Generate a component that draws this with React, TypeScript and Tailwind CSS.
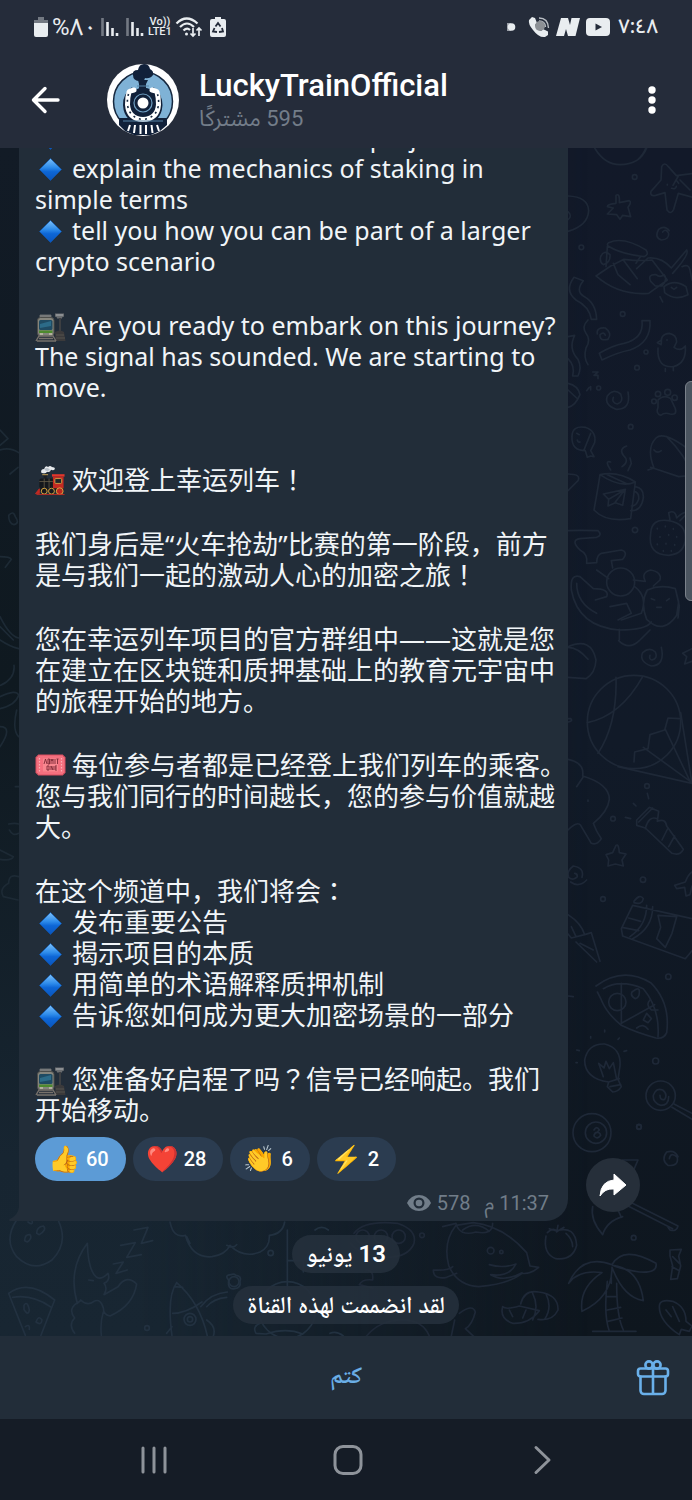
import { Fragment, type ReactNode } from "react";

/* ---------- inline message pictograms ---------- */

function Diamond() {
  return (
    <svg viewBox="0 0 31 28" className="-my-2 mr-[6px] inline-block h-7 w-[31px] align-[3px]" role="img" aria-label="blue diamond">
      <defs>
        <linearGradient id="dia" x1="0" y1="0" x2="0" y2="1">
          <stop offset="0" stopColor="#7cc0fa" />
          <stop offset="0.4" stopColor="#2f8deb" />
          <stop offset="0.6" stopColor="#0d66d6" />
          <stop offset="1" stopColor="#0a55bd" />
        </linearGradient>
      </defs>
      <path d="M15.500 3.500 26.500 14.500 15.500 25.500 4.500 14.500Z" fill="url(#dia)" stroke="#0f5ab8" strokeWidth="0.600" strokeLinejoin="round" />
    </svg>
  );
}

function Station() {
  return (
    <svg viewBox="0 0 31 30" className="-my-2 mr-[6px] inline-block h-[30px] w-[31px] align-[1px]" role="img" aria-label="station">
      <path d="M20 1.500h9v3l-2 1v1h-5v-1l-2-1z" fill="#6a6d70" />
      <path d="M21 3h7" stroke="#aeb2b4" strokeWidth="1" />
      <path d="M24 6h2v14h-2z" fill="#3d3f42" />
      <path d="M20 20q5-3 9 0l1.500 9h-10z" fill="#3b3a3b" />
      <path d="M21 23h8M21 26h9" stroke="#55534f" strokeWidth="1" />
      <path d="M5 3h11v2H5zM7 4l-1 3M14 4l1 3" fill="#77797a" stroke="#77797a" strokeWidth="0.800" />
      <rect x="2.500" y="5.500" width="16.500" height="18.500" rx="3" fill="#85857d" stroke="#4d4e4b" />
      <rect x="4" y="8" width="13.500" height="10" rx="1.500" fill="#1f4b63" />
      <path d="M5 12l11-3v5l-11 2z" fill="#2f7391" opacity="0.800" />
      <path d="M4 18.500h13.500v2.500H4z" fill="#4d8a2e" />
      <path d="M5 22h3M14 22h3" stroke="#e2dfc0" strokeWidth="1.200" />
      <path d="M1 29l3-5h14l3 5M4 26.500h14M2 29h19" fill="none" stroke="#77716b" strokeWidth="1.400" />
    </svg>
  );
}

function Locomotive() {
  return (
    <svg viewBox="0 0 31 32" className="-my-2 mr-[6px] inline-block h-[31px] w-[31px] align-[2px]" role="img" aria-label="locomotive">
      <path d="M6 8q-1-4 3-4 1-4 4-2 2-2 4 0 3 0 3 2-1 2-4 1-1 3-4 2-2 3-6 1z" fill="#e6e9ec" />
      <path d="M9 4q3-2 5 0 2 1-1 2-2 1-4-2z" fill="#b7bfc7" />
      <path d="M7 9h6l-1.500 3v3H8.500v-3z" fill="#1b1e22" />
      <path d="M7 10h6" stroke="#c9a65a" />
      <rect x="4" y="14" width="15" height="10" rx="2" fill="#15181c" />
      <path d="M4 17h14M9 14v10M14 14v10" stroke="#69604a" strokeWidth="0.800" />
      <path d="M17 9.500h13v2.500H17z" fill="#e3362c" />
      <path d="M18 12h11v14H18z" fill="#c32a22" />
      <rect x="20" y="14" width="7" height="5" rx="1" fill="#20252b" stroke="#e8b64a" strokeWidth="0.800" />
      <path d="M4 24h25v2.500H4z" fill="#1a1c20" />
      <circle cx="9" cy="27" r="3" fill="#17191d" stroke="#d9a63f" />
      <circle cx="16.500" cy="27" r="3" fill="#17191d" stroke="#d9a63f" />
      <circle cx="25" cy="27" r="3.500" fill="#b9271f" stroke="#d9a63f" />
      <path d="M0 29.500l4-5v5zM1 30.500h29" fill="#c32a22" stroke="#c32a22" strokeWidth="0.900" />
    </svg>
  );
}

function Ticket() {
  return (
    <svg viewBox="0 0 31 22" className="-my-1 mr-[6px] inline-block h-[22px] w-[31px] align-[3px]" role="img" aria-label="admission ticket">
      <path d="M3 1h25a2 2 0 0 0 2 2v16a2 2 0 0 0-2 2H3a2 2 0 0 0-2-2V3a2 2 0 0 0 2-2z" fill="#f4707f" stroke="#d94f60" />
      <path d="M4.500 4v14M26.500 4v14" stroke="#fbb0b6" strokeWidth="1.200" strokeDasharray="1.500 1.500" />
      <path d="M8 4.500h15v13H8z" fill="#f8868f" />
      <path d="M9 10l1.500-5 1.500 5M13 5v5h1.500V5zM16 10V5l1 2 1-2v5M20 5v5M21.500 5h2M22.500 5v5M12 12v4h2v-4zM16 16v-4l2 4v-4M22 12h-2v4h2M20 14h2" fill="none" stroke="#7c2733" strokeWidth="0.900" />
    </svg>
  );
}

/* Full-width marks drawn centred in their cell. */
function Mark({ children }: { children: ReactNode }) {
  return (
    <span lang="ja" className="font-['Noto_Sans_CJK_JP','Noto_Sans_CJK_SC',sans-serif] leading-none">
      {children}
    </span>
  );
}

function Lines({ items }: { items: ReactNode[] }) {
  return (
    <p>
      {items.map((line, i) => (
        <Fragment key={i}>
          {i > 0 && <br />}
          {line}
        </Fragment>
      ))}
    </p>
  );
}

function Message() {
  return (
    <div className="flex flex-col gap-[62px] text-[#f1f5f8]">
      <div lang="en" className="flex flex-col gap-[33px] font-['Noto_Sans',sans-serif] text-[25px] leading-[31px]">
        <Lines
          items={[
            <><Diamond />reveal the essence of the project</>,
            <><Diamond />explain the mechanics of staking in</>,
            "simple terms",
            <><Diamond />tell you how you can be part of a larger</>,
            "crypto scenario",
          ]}
        />
        <Lines
          items={[
            <><Station />Are you ready to embark on this journey?</>,
            "The signal has sounded. We are starting to",
            "move.",
          ]}
        />
      </div>
      <div lang="zh-CN" className="flex flex-col gap-[33px] font-['Noto_Sans','Noto_Sans_CJK_SC',sans-serif] text-[26px] leading-[31px]">
        <Lines items={[<><Locomotive />欢迎登上幸运列车<Mark>！</Mark></>]} />
        <Lines
          items={["我们身后是“火车抢劫”比赛的第一阶段，前方", <>是与我们一起的激动人心的加密之旅<Mark>！</Mark></>]}
        />
        <Lines
          items={["您在幸运列车项目的官方群组中——这就是您", "在建立在区块链和质押基础上的教育元宇宙中", "的旅程开始的地方。"]}
        />
        <Lines
          items={[<><Ticket />每位参与者都是已经登上我们列车的乘客。</>, "您与我们同行的时间越长，您的参与价值就越", "大。"]}
        />
        <Lines
          items={[
            <>在这个频道中，我们将会<Mark>：</Mark></>,
            <><Diamond />发布重要公告</>,
            <><Diamond />揭示项目的本质</>,
            <><Diamond />用简单的术语解释质押机制</>,
            <><Diamond />告诉您如何成为更大加密场景的一部分</>,
          ]}
        />
        <Lines items={[<><Station />您准备好启程了吗<Mark>？</Mark>信号已经响起。我们</>, "开始移动。"]} />
      </div>
    </div>
  );
}

/* ---------- header ---------- */

function StatusBar() {
  return (
    <div className="flex h-[54px] items-center justify-between px-[34px] text-[#e9edf0]">
      <div className="flex items-center">
        <svg viewBox="0 0 14 22" className="h-[22px] w-[14px]" fill="#e9edf0">
          <path d="M4 1h6v3h4v3H0V4h4z" opacity="0.400" />
          <path d="M0 7h14v12a2 2 0 0 1-2 2H2a2 2 0 0 1-2-2z" />
        </svg>
        <span className="ml-1 font-['Roboto','Noto_Sans_Arabic',sans-serif] text-[24px] leading-7">%٨٠</span>
        <svg viewBox="0 0 44 20" className="ml-[3px] h-5 w-11" strokeWidth="2.600" stroke="#e9edf0">
          <path d="M2.500 1v18M27.500 1v18" opacity="0.400" />
          <path d="M7.500 5v14M12.500 11v8M17 16v3M32.500 5v14M37.500 11v8M42 16v3" />
        </svg>
        <span className="ml-1 flex flex-col items-center font-['Roboto',sans-serif] text-[11px] leading-[10px] font-medium">
          <span>Vo))</span>
          <span>LTE1</span>
        </span>
        <svg viewBox="0 0 28 22" className="ml-[3px] h-[22px] w-7" fill="none" stroke="#e9edf0" strokeWidth="2.200">
          <path d="M1.500 7.500q10-10 21 0M5 11q7-7 14 0M8.500 14.500q3.500-3.500 6.500-.5" />
          <circle cx="11.500" cy="18" r="1.500" fill="#e9edf0" stroke="none" />
          <path d="M18 12v8M15.500 17.500l2.500 2.500 2.500-2.500M24 20v-8M21.500 14.500l2.500-2.500 2.500 2.500" strokeWidth="1.700" />
        </svg>
        <svg viewBox="0 0 16 22" className="ml-[7px] h-[22px] w-4">
          <path d="M5 1h6v2h3a2 2 0 0 1 2 2v14a2 2 0 0 1-2 2H2a2 2 0 0 1-2-2V5a2 2 0 0 1 2-2h3z" fill="#e9edf0" />
          <path d="M5.500 10.500 8 7l2.500 3.500M12 12l1 3.500-4 .5M7 16l-4-.5L4.500 12" fill="none" stroke="#252c3a" strokeWidth="1.800" />
        </svg>
      </div>
      <div className="flex items-center">
        <svg viewBox="0 0 10 10" className="h-[10px] w-[10px]" fill="#e9edf0">
          <path d="M1 1h4v8H1z" opacity="0.600" />
          <circle cx="5.500" cy="5" r="3.800" />
        </svg>
        <svg viewBox="0 0 22 22" className="ml-[12px] h-[22px] w-[22px]">
          <path d="M1 4 4 1l3 1 2 5-2 2q2 4 6 6l2-2 5 2.500V19l-3 2Q11 22 5 14 0 8 1 4z" fill="#e9edf0" />
          <path d="M11 2q9 0 9.500 10M11 5q6 0 6.500 6" fill="none" stroke="#b9bec4" strokeWidth="1.400" />
          <circle cx="12" cy="10" r="5" fill="#8c9095" />
        </svg>
        <svg viewBox="0 0 24 20" className="ml-[6px] h-5 w-6" fill="#e9edf0">
          <path d="M5 1h7l2 7 1.500-7H24l-4.500 18H12l-2-7-2 7H0z" />
        </svg>
        <svg viewBox="0 0 24 18" className="ml-[6px] h-[18px] w-6">
          <rect width="24" height="18" rx="4" fill="#e9edf0" />
          <path d="M9.500 5.500 16 9l-6.500 3.500z" fill="#252c3a" />
        </svg>
        <time className="ml-[8px] font-['Noto_Sans_Arabic','Noto_Sans',sans-serif] text-[20px] leading-7 font-medium">٧:٤٨</time>
      </div>
    </div>
  );
}

function Avatar() {
  return (
    <svg viewBox="0 0 72 72" className="h-[72px] w-[72px] shrink-0" role="img" aria-label="LuckyTrainOfficial">
      <circle cx="36" cy="36" r="36" fill="#fff" />
      <circle cx="36" cy="37.500" r="29.500" fill="#7fb2d6" stroke="#16283f" strokeWidth="1.500" />
      <path d="M26 11q-1-5 5-5 1-6 6-6 5 0 6 5 4 2 3 6-3 4-8 3-1 4-5 3-7 0-7-6z" fill="#11213a" />
      <path d="M31 16h10l-2 4v6h-7v-6z" fill="#11213a" />
      <path d="M30 22h12" stroke="#5784a6" strokeWidth="1" />
      <path d="M28 26q8-5 17 0l5 12-2 18H22l-2-18z" fill="#11213a" />
      <path d="M12 54h48v7l-7 6-9 4H27l-9-4-6-6z" fill="#11213a" />
      <path d="M27 26q-8 6-7.500 15 1 15 16.500 15.500 15-.500 16-15.500 0-9-7.500-15" fill="none" stroke="#11213a" strokeWidth="7" />
      <path d="M27 26q-4.500 1-5 2-1.500 5-1.500 12.500 1 14.500 15.500 15 14.500-.500 15.500-15 0-7.500-1.500-12.500-.500-1-5-2" fill="none" stroke="#fff" strokeWidth="5" strokeLinecap="round" strokeLinejoin="round" />
      <path d="M21.500 30q-1.500 5-1 11 2 13 15.500 14.500 13.500-1.500 15.500-14.500.500-6-1-11" fill="none" stroke="#16283f" strokeWidth="1.600" strokeDasharray="2 4" />
      <circle cx="36" cy="39" r="12" fill="#11213a" />
      <circle cx="36" cy="39" r="9" fill="none" stroke="#6f9fc2" strokeWidth="1.200" />
      <circle cx="36" cy="39" r="5.500" fill="#fff" />
      <path d="M23 61l-2 6M28 61l-1 8M33.500 61v9M39 61v9M44.500 61l1 8M50 61l2 6" stroke="#fff" strokeWidth="2" />
      <path d="M16 57h40" stroke="#5784a6" strokeWidth="1.200" />
    </svg>
  );
}

function Header() {
  return (
    <header className="z-10 shrink-0 bg-[#252c3a]">
      <StatusBar />
      <div className="flex h-[94px] items-center pr-8 pb-[2px] pl-[30px]">
        <button type="button" aria-label="Back" className="flex h-12 w-8 items-center">
          <svg viewBox="0 0 32 32" className="h-8 w-8" fill="none" stroke="#fff" strokeWidth="3.400" strokeLinecap="round" strokeLinejoin="round">
            <path d="M28 16H4M15 4.500 3.500 16 15 27.500" />
          </svg>
        </button>
        <a href="#profile" className="ml-[45px] flex min-w-0 flex-1 items-center">
          <Avatar />
          <span className="ml-5 flex flex-col items-start pt-[2px] whitespace-nowrap">
            <span className="font-['Roboto',sans-serif] text-[31px] leading-[36px] font-medium text-white">LuckyTrainOfficial</span>
            <span dir="rtl" className="font-['Roboto','Noto_Sans_Arabic',sans-serif] text-[22px] leading-[30px] text-[#737d89]">595 مشتركًا</span>
          </span>
        </a>
        <button type="button" aria-label="More options" className="flex h-12 w-4 items-center justify-center text-white">
          <svg viewBox="0 0 8 28" className="h-7 w-2" fill="#fff">
            <circle cx="4" cy="4" r="3.700" />
            <circle cx="4" cy="14" r="3.700" />
            <circle cx="4" cy="24" r="3.700" />
          </svg>
        </button>
      </div>
    </header>
  );
}

/* ---------- chat wallpaper ---------- */

function Wallpaper() {
  return (
    <svg viewBox="0 0 692 1188" preserveAspectRatio="xMaxYMax slice" className="absolute inset-0 h-full w-full" aria-hidden="true">
      <defs>
        <linearGradient id="base" x1="0" y1="0" x2="0" y2="1">
          <stop offset="0" stopColor="#121929" />
          <stop offset="0.500" stopColor="#111a28" />
          <stop offset="1" stopColor="#0e161e" />
        </linearGradient>
        <linearGradient id="left" x1="0" y1="0" x2="0" y2="1">
          <stop offset="0" stopColor="#121b26" />
          <stop offset="0.450" stopColor="#0f1920" />
          <stop offset="0.850" stopColor="#172531" />
          <stop offset="1" stopColor="#182632" />
        </linearGradient>
        <linearGradient id="fade" x1="0" y1="0" x2="1" y2="0">
          <stop offset="0.200" stopColor="#fff" />
          <stop offset="0.850" stopColor="#000" />
        </linearGradient>
        <mask id="leftMask">
          <rect width="692" height="1188" fill="url(#fade)" />
        </mask>
      </defs>
      <rect width="692" height="1188" fill="url(#base)" />
      <rect width="692" height="1188" fill="url(#left)" mask="url(#leftMask)" />
      <g fill="none" stroke="#1e2837" strokeLinecap="round" strokeLinejoin="round" strokeWidth="5">
        {/* right edge, upper half */}
        <g transform="translate(560 -8) scale(.33333)">
          <path d="M104 24q30 50 76 50 60 0 80-50M232 60q20-18 26-38" />
          <circle cx="224" cy="111" r="7" />
          <path d="M305 80q8-16 20 0l24 27 47-6M305 80l-2 40-30 34q-4 16 14 12l28-8 6 52q12 16 20-2l14-48 42 12M355 108l-16 28M360 120l30 30M322 133v2M350 122l6 8M335 145q12 4 14-6" />
          <path d="M168 166q12-8 10 22l30-6q8 4-4 20l8 28-24-4-8 12-10-14-28-2 18-18-18-4q0-8 26-10z" />
          <path d="M24 168q60 2 62 44-2 44-62 62M24 215q14 12 0 24" />
          <path d="M328 272q-14-18-32-4-14 24 8 32 24-2 22-20-8-16-18-4" />
          <circle cx="64" cy="322" r="7" />
          <path d="M146 308q44-20 112 22 10 14-6 20-70-8-108-32-4-6 2-10zM142 320l-4 60M240 352l-12 18M122 350q10-22 28-6 2 24-20 30-12-8-8-24z" />
          <path d="M108 408l44-30 40-20q50 6 84 2l46 60-56 40q-90 8-158-52zM230 386l34-32q40-4 70 30l46-54q10 12-42 70M160 370l14 34 36 30M190 360l42 56M272 424q-10-22 16-20 12 10 24 0 12 12-6 34h-20z" />
          <path d="M312 440q30-24 66 0l6 24q-40 20-70-6zM334 442l8 6 8-6M366 380q20-10 24 10l6 30M300 470l8 16" />
          <path d="M42 412q-30 40 6 68 40 20 46 58h16q-2-50-40-70-24-16 0-46z" />
          <path d="M84 540q-20 20-6 40 16 20 0 44-8 30 6 50M112 582q-4-20 24-18 22 16 8 34-26 6-24-14 12-10 16 2" />
          <path d="M246 542h24q4 66-60 88-40 8-84 30l-8-20q40-24 74-30 60-14 54-68z" />
          <circle cx="188" cy="522" r="7" /><circle cx="258" cy="636" r="6" /><circle cx="231" cy="683" r="7" />
          <path d="M304 610q-4-28 24-30 22 4 22 26l-8 16q20 14 34-4 4 52-36 62-50 4-46-56M304 600l-12 8 12 6M316 686v8M340 684v8M320 600h2" />
          <path d="M24 590l20-4q-20 40 10 72 12 24 0 50H38q8-30-14-52M24 730q30 6 36 34-14 34-36 38M24 750l26 24" />
          <path d="M98 696h16l-12 10h12v10M80 752l8-10M92 740v10" /><circle cx="116" cy="744" r="6" />
          <path d="M204 756q10 54-36 52-36-14-26-40 18-24 40-6 10 24-10 30-18-4-12-20" />
          <path d="M294 780q18-18 38-4l14 30q6 20-16 16-16-6-28 4-16-6-8-24z" />
          <circle cx="282" cy="784" r="7" /><circle cx="294" cy="762" r="8" /><circle cx="323" cy="757" r="9" /><circle cx="344" cy="773" r="8" /><circle cx="212" cy="860" r="7" />
          <path d="M36 890q0-34 40-28 34 12 28 46l-12 24 10 18-10-2-10 4-6-20q-42 0-40-42zM92 880l-20 50M50 880l8 4M60 906q-6 2-8-6" />
          <path d="M264 990l18-6q-24-60 6-90 24-24 108 42M320 890q60 60 76 116l-40 4-84-28M282 930q10 12 22 2M24 1002q40 0 30 20l-30 30" />
          <path d="M152 990q-20-30 0-24M186 980q24-16 4-34-14-20 10-28M204 992l10-22-4-16" />
          <path d="M120 1004q-6 40-18 106 36 38 110 26l14-110q-44 20-106-22zM120 1004q54-12 106 22M142 1004l60 28M226 1040q26 4 24 34-6 40-38 38M222 1054q16 2 14 24-8 22-22 20" />
          <path d="M130 1062l66-14-8 48-22-8-22 10 2-20zM146 1078l48-28-28 36" />
          <circle cx="225" cy="1170" r="8" />
          <path d="M272 1180q2-46 54-38 50 8 50 50 0 50-50 54-64-2-54-66zM330 1140l-4-22q20-10 24 16 20-20 34-16l-24 24" />
          <path d="M292 1165v2M316 1158v2M340 1166v2M300 1190v2M326 1184v2M350 1190v2M292 1212v2M318 1210v2M344 1214v2M310 1232v2M334 1232v2" />
          <path d="M24 1172q30-2 90 0 14 14-4 20l-50 4q-30 4 0 34 24 12 20 40l30-2q0-22 14-28l60-10q22 6 4 28l-34 4 4 22" />
          <path d="M60 1310q-30-10-26 40 20 110 144 120 80 0 96-24M60 1310l40 36q50 0 40 24l-34 10M50 1330q0 60 60 90M110 1290l36 26M150 1400l50-10 14 30-40 20M178 1468v32M270 1470l-30 30" />
          <circle cx="182" cy="1326" r="42" />
          <path d="M220 1320l36 4q-14-26 16-34 34 6 28 30l-20 18M262 1350q40-18 84-4l10 40-6 40q-40 60-90 12-20-50 2-88zM346 1346l12 52-4 36M274 1376l10 4M320 1382l8-6M290 1402h14M224 1340q40 30 20 80l-60 20" />
        </g>
        {/* right edge, lower half */}
        <g transform="translate(560 492) scale(.33333)">
          <path d="M24 20q70-30 84 40-2 40-30 56l-54-4M24 22q30 0 60 36M176 2q30 30 62 0" />
          <path d="M304 22q12 54-30 56-38-14-26-40 20-18 38-2 8 20-10 24-10-2-6-14M396 26l-28 14 12 10-6 22 22-8" />
          <circle cx="222" cy="246" r="140" />
          <path d="M82 248q100-20 166-138M168 112q4 140-54 228M174 380l222 50-34-212M222 366l2-30 40-10 6-42 44-14 10-36 34 2M250 322l146 106M316 268l76 160" />
          <path d="M24 236h8q8 8-8 10M24 358q50 10 44 50 80 24 80 70-4 36-48 72 8 24 24 46-12 20-30 14l-32-54q-10-14-38 14M50 440l20-30M84 480v4" />
          <circle cx="261" cy="438" r="7" /><circle cx="159" cy="536" r="7" /><circle cx="249" cy="719" r="8" /><circle cx="129" cy="777" r="7" /><circle cx="325" cy="1010" r="8" /><circle cx="287" cy="1263" r="9" /><circle cx="237" cy="1461" r="7" />
          <path d="M230 540l38-38 28 12-4 30q24-10 28 14l50 70q-10 20-34 12l-80-76-26-8zM236 546l42-42M256 566q10-40 36-30M306 600l18-36M326 620l18-32M262 460l4 16M220 490l8 8M196 532l16 4" />
          <path d="M168 616q8-6 10 22l20 4-12 18 4 18-24-6-22 6 2-18-8-16 20-6z" />
          <path d="M80 720q-24 24-48 6M66 712q8-28-26-34-22 16-14 34 14 12 26-2 0-10-8-10" />
          <path d="M396 696q-12 8-20 30l-32 10 6 10 24-4 4 26 12-4 6-26" />
          <path d="M222 784q18-24 28-8-4 20-28 12zM218 796l-34 70 4 22 188 68 20-24M218 796l178 40M260 796q0 60-50 94M278 800q0 64-60 96M186 862l50 10M206 834l36 10M294 826l56 4-14 50-20 42-26-26 12-34z" />
          <path d="M24 824q40 26 50 60l-40 10-10-12M74 884l20-6 26 86M48 906l62 60M60 910l40 20M34 860l14 30" />
          <path d="M108 1038q80-60 164-10 60 60 48 150-8 20-32 16-60-16-104-38-44-36-60-76l-12-24M130 1046q50-30 120 0 50 60 44 144M184 1030v120l100-56" />
          <circle cx="172" cy="1086" r="26" />
          <path d="M216 1056q24-20 22 2 0 14-12 18-16-8-10-20zM250 1140l10-20 14 16-10 12zM230 1164q20-16 34 4M270 1080q-14 14 4 30h20" />
          <path d="M146 1326q-72-10-72-66 10-50 60-48 50 12 46 66l-6 40 10 22q-10 16-26 16l-16-16zM146 1326l32-10M150 1340l32-6M130 1310l-14-40 16 14 6-20 10 22 12-18 10 50M134 1170v6M92 1190v4M50 1230l8 2M48 1268h4M200 1232l-8 2M178 1194l-4 4" />
          <circle cx="302" cy="1367" r="44" />
          <path d="M326 1370q0 26-24 26-24-8-22-30 8-24 28-16 16 12 6 28-14 4-14-12M342 1392l54 28M336 1402l60 36" />
          <path d="M24 1068l16 2" />
        </g>
        {/* bottom right */}
        <g transform="translate(346 972) scale(.33333)">
          <circle cx="738" cy="38" r="57" /><circle cx="750" cy="38" r="32" />
          <path d="M744 30q8-14 16 0-8 10-12 8 14-4 16 8-10 14-20 2 0-8 8-10" />
          <circle cx="879" cy="20" r="7" />
          <path d="M996 110q-10-22-34-14-18 24 4 40 32 4 28-24-20-18-24 4" />
          <path d="M740 260q-8 40 30 84 12-40 60-54M830 120h46l-20 46M840 240l156 78q-4 18-24 12l-6-8M830 250l150 76M780 190l46 102" />
          <circle cx="228" cy="346" r="7" /><circle cx="863" cy="353" r="7" />
          <path d="M24 340q30-40 130-30 60 20 50 60-20 50-110 40-60-10-80-40" />
          <circle cx="50" cy="350" r="20" /><circle cx="105" cy="350" r="20" /><circle cx="158" cy="350" r="20" />
          <path d="M330 316q-40 50-22 120 24 60 90 64 90-8 130-40 24 4 50-18l-26-4-10-40q-70-80-160-90zM290 320l40-10q10 40 60 26 50 10 50-26M320 440q-10 12-58 10 0 30 40 22l30-12M430 434q40 12 80-2-20 40-76 32 40 24 94-6M350 330q40-30 80 4" />
          <circle cx="434" cy="392" r="10" /><circle cx="466" cy="396" r="5" />
          <path d="M600 348q-10 54 30 68 50 6 62-40-4-60-60-44-12-10-28 6M632 336l4-20M610 326l24 8 20-12M660 340q20 18 20 40" />
          <path d="M668 490q40-90 130-56 34-60 132-4 6 30-50 26-60-10-80-20 80 10 92 106-60-10-94-100 0 90-90 132-10-70 60-116-70-10-100 32zM784 484q-12 100 6 150M812 490q0 100 20 140M780 530h32M784 570l40-8M786 604l42-10M740 634h130M796 470v20" />
          <path d="M972 390l34-2-8 20 6 30-10 38-20 2 6-40-8-30zM980 410l20 20M978 440l22 12" />
          <path d="M940 560q0-24 40-16 40 16 40 60l18 14-8 16-24-6-6 16q-60-40-60-84zM980 560l20 44M960 570l16 20" />
          <path d="M470 560q10 10 50-2l60 14q-30 40-80 38-40-14-30-50zM524 552q10-44 54-36 60 8 58 54-16 34-60 28M560 520q20 40 0 80M600 522q20 40-4 76M490 570l10 20M540 570l-10 24" />
          <path d="M60 650q40-50 110-50 60 0 80 48M340 580q40-30 48-4-10 40-30 50l26 24M326 600l-10 48M60 450q24 0 20 30-30-4-40 14l40 10" />
        </g>
        {/* bottom left */}
        <g transform="translate(0 972) scale(.33333)" stroke="#223140">
          <path d="M50 300q-40 60 0 110 50 50 106 10 50-50 20-116M84 306q16 12 12-4M74 362q0-20 16-18 8 10-8 22zM110 340q0-20 20-22 12 10-12 26z" />
          <path d="M26 520q60-44 138 20l-42 108M26 520l10 26 40 100M38 532q60-10 116 30M72 556q10-16 16 14-4 20-16-2zM108 606q8-22 18-6-2 18-18 6zM76 620q14-10 12 8" />
          <path d="M262 370q-60 80-30 180l10-10q20 20 40 4 20-10 28 20 0 20 20 24 70-30 80-96-30-30-56 8l-42 24q12-20 0-34 20-8 12-30-20 20-34 12-26-20-28-102zM240 544q-40 20-16 50-20 20 0 46M310 576q-10 30-6 70M266 480l14 2" />
          <path d="M340 432l30-6-22 34 34-10M362 376l44-8-26 44 44-8M402 330l42-8-20 48 34-8" />
          <path d="M510 306q10 50 46 40 20 70 80 64 40-6 54-34 40 40 90 20 30-14 28-50 40-4 46-40M680 376q20 10 30-2M560 350l10 20" />
          <circle cx="812" cy="399" r="8" /><circle cx="441" cy="624" r="7" />
          <path d="M530 488q70 60 92 160M530 488q-30 40-14 160M518 580q40 0 88-34M524 500l24 2M500 640l16-20M620 600q30 20 20 48" />
          <circle cx="570" cy="598" r="18" /><circle cx="570" cy="598" r="8" />
          <path d="M602 560q30-40 80-44M620 560q20-24 60-28" /><circle cx="702" cy="485" r="15" />
          <path d="M686 480q-14-14 6-16 10-4 16 2 18 2 12 18 4 20-16 22-22 4-18-26z" />
          <circle cx="862" cy="570" r="85" />
          <path d="M862 330v220M864 422h46v34M780 610q-24 10-12 30l30 2q60-20 110 0" />
          <path d="M945 330q20-16 40 0M990 640q20-8 40 8" />
        </g>
        {/* left edge */}
        <g transform="translate(0 252) scale(.33333)" stroke="#1d2a35">
          <path d="M0 90l24 26-24 20M0 150q30-10 56 8M30 222l24-20M26 346q14-16 20 4 14 20-4 24-16-2-16-28z" />
          <path d="M0 470q30 0 34 8l-18 24M0 650q30 60 56 64M0 680l40 40M0 720q30 20 56 26M42 796q4 40-40 60M0 890q50-24 56-4-10 30-56 40M0 980q40 0 0 60M50 930q-14 60 6 80M46 1160h12M26 1272q20-4 30 0M28 1290q10 20 28 10M0 1350l40 20q-6 14-40 8M56 1430q-30-10-30 20-30 16-16 40l44 10" />
        </g>
      </g>
    </svg>
  );
}

/* ---------- chat body ---------- */

const reactions = [
  { emoji: "👍", count: 60, chosen: true },
  { emoji: "❤️", count: 28, chosen: false },
  { emoji: "👏", count: 6, chosen: false },
  { emoji: "⚡", count: 2, chosen: false },
];

function Reactions() {
  return (
    <div className="mt-[11px] flex gap-[7px] font-['Roboto',sans-serif]">
      {reactions.map((r) => (
        <button
          key={r.emoji}
          type="button"
          aria-pressed={r.chosen}
          className={
            r.chosen
              ? "flex h-11 items-center rounded-full bg-[#5c9bd6] pr-[17px] pl-[13px] text-[20px] font-medium text-white"
              : "flex h-11 items-center rounded-full bg-[#2b3c50] pr-[17px] pl-[13px] text-[20px] font-medium text-white"
          }
        >
          <span className="w-[38px] text-left text-[26px] leading-8">{r.emoji}</span>
          <span>{r.count}</span>
        </button>
      ))}
    </div>
  );
}

function Pill({ children }: { children: ReactNode }) {
  return (
    <div
      dir="rtl"
      className="rounded-full bg-[#25303c]/90 px-[14px] font-['Roboto','Noto_Naskh_Arabic',sans-serif] text-[24px] leading-[38px] font-semibold text-white"
    >
      {children}
    </div>
  );
}

function Chat() {
  return (
    <main className="relative flex min-h-0 flex-1 flex-col justify-end overflow-hidden">
      <Wallpaper />
      <div className="relative flex shrink-0 items-end pl-[19px]">
        <article className="relative min-w-0 flex-1 rounded-br-[22px] bg-[#222d39] pl-4">
          <svg viewBox="0 0 12 14" className="absolute bottom-0 -left-[10px] h-[14px] w-3" fill="#222d39" aria-hidden="true">
            <path d="M12 0v14H1q-2-1 0-2 8-4 9-12z" />
          </svg>
          <Message />
          <Reactions />
          <div className="flex h-10 items-center justify-end pt-1 pr-[19px] font-['Roboto','Noto_Sans_Arabic',sans-serif] text-[20px] leading-6 text-[#717d89]">
            <svg viewBox="0 0 24 18" className="mr-[6px] h-[18px] w-6" aria-hidden="true">
              <path d="M0 9Q4 1 12 1t12 8q-4 8-12 8T0 9z" fill="#717d89" />
              <circle cx="12" cy="9" r="5.500" fill="#222d39" />
              <circle cx="12" cy="9" r="3.300" fill="#717d89" />
            </svg>
            <span>578</span>
            <time dir="rtl" className="ml-[14px]">11:37 م</time>
          </div>
        </article>
        <div className="flex w-[124px] shrink-0 pb-[9px] pl-[18px]">
          <button type="button" aria-label="Share" className="flex h-[54px] w-[54px] items-center justify-center rounded-full bg-[#262f3a]">
            <svg viewBox="0 0 28 24" className="h-6 w-7" fill="#fff" stroke="#fff" strokeWidth="1" strokeLinejoin="round">
              <path d="M15 1 27 12 15 22v-6Q6 15 1 23 2 8 15 7z" />
            </svg>
          </button>
        </div>
      </div>
      <div className="relative flex shrink-0 flex-col items-center gap-[13px] pt-[14px] pb-3">
        <Pill>13 يونيو</Pill>
        <Pill>لقد انضممت لهذه القناة</Pill>
      </div>
      <div className="absolute top-[233px] -right-[3px] h-[220px] w-[10px] rounded-l-md border border-[#7b828b] bg-[#4b5560]" />
    </main>
  );
}

/* ---------- footer ---------- */

function Footer() {
  return (
    <footer className="shrink-0">
      <div className="grid h-[83px] grid-cols-[1fr_auto_1fr] items-center bg-[#222d39] px-[22px]">
        <span />
        <button type="button" className="font-['Noto_Naskh_Arabic',sans-serif] text-[24px] leading-8 font-semibold text-[#6aaee6]">
          كتم
        </button>
        <button type="button" aria-label="Send a gift" className="justify-self-end">
          <svg viewBox="0 0 34 36" className="h-9 w-[34px]" fill="none" stroke="#6ab0ea" strokeWidth="2.600" strokeLinejoin="round" strokeLinecap="round">
            <rect x="2" y="8.500" width="30" height="8" rx="2.500" />
            <path d="M4.500 16.500v14a3.500 3.500 0 0 0 3.500 3.500h18a3.500 3.500 0 0 0 3.500-3.500v-14M17 8.500V34" />
            <circle cx="13" cy="5" r="3.600" />
            <circle cx="21" cy="5" r="3.600" />
          </svg>
        </button>
      </div>
      <nav className="flex h-[81px] items-center justify-center gap-[162px] bg-[#151c26] pl-1">
        <button type="button" aria-label="Recent apps">
          <svg viewBox="0 0 32 32" className="h-8 w-8" stroke="#8e939a" strokeWidth="3" strokeLinecap="round">
            <path d="M5 4v24M16 4v24M27 4v24" />
          </svg>
        </button>
        <button type="button" aria-label="Home">
          <svg viewBox="0 0 32 32" className="h-8 w-8" fill="none" stroke="#8e939a" strokeWidth="3">
            <rect x="3" y="2.500" width="26" height="27" rx="8" />
          </svg>
        </button>
        <button type="button" aria-label="Back">
          <svg viewBox="0 0 32 32" className="h-8 w-8" fill="none" stroke="#8e939a" strokeWidth="3" strokeLinecap="round" strokeLinejoin="round">
            <path d="M10 3.500l13 12.500L10 28.500" />
          </svg>
        </button>
      </nav>
    </footer>
  );
}

export default function App() {
  return (
    <div className="flex h-screen flex-col overflow-hidden bg-[#151c26]">
      <Header />
      <Chat />
      <Footer />
    </div>
  );
}
